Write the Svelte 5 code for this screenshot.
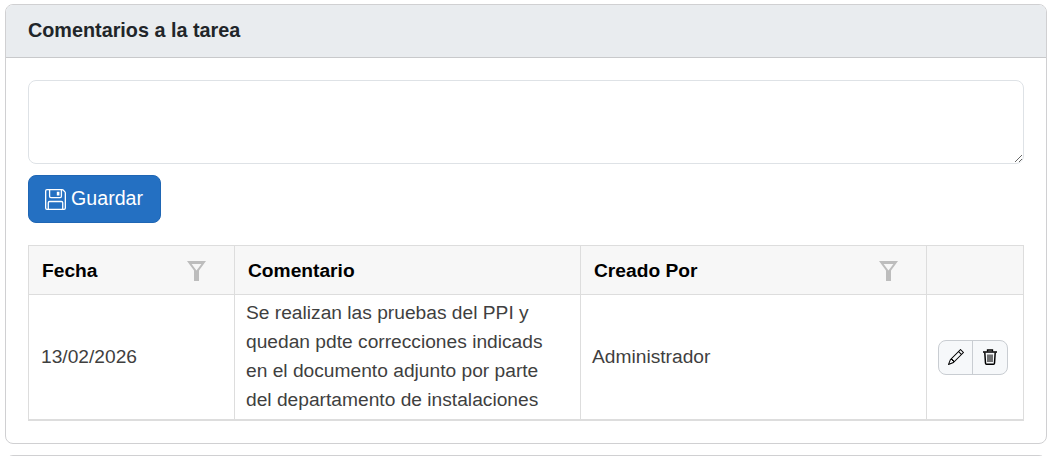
<script>
  const filas = [
    {
      fecha: '13/02/2026',
      comentario: 'Se realizan las pruebas del PPI y quedan pdte correcciones indicads en el documento adjunto por parte del departamento de instalaciones',
      autor: 'Administrador'
    }
  ];
</script>

{#snippet embudo()}
  <svg class="embudo" viewBox="0 0 19 20" width="19" height="20" aria-hidden="true">
    <path d="M0 0h19l-7 9.5V20H7V9.5z M4.6 3l4.9 6.4L14.4 3z" fill-rule="evenodd" fill="#bdbdbd" />
  </svg>
{/snippet}

<div class="pagina">
  <section class="tarjeta">
    <header class="cabecera">Comentarios a la tarea</header>
    <div class="cuerpo">
      <textarea class="comentario" aria-label="Comentario"></textarea>

      <button class="guardar">
        <svg viewBox="0 0 16 16" width="21" height="21" fill="currentColor" aria-hidden="true">
          <path d="M11 2H9v3h2V2Z" />
          <path d="M1.5 0h11.586a1.5 1.5 0 0 1 1.06.44l1.415 1.414A1.5 1.5 0 0 1 16 2.914V14.5a1.5 1.5 0 0 1-1.5 1.5h-13A1.5 1.5 0 0 1 0 14.5v-13A1.5 1.5 0 0 1 1.5 0ZM1 1.5v13a.5.5 0 0 0 .5.5H2v-4.5A1.5 1.5 0 0 1 3.5 9h9a1.5 1.5 0 0 1 1.5 1.5V15h.5a.5.5 0 0 0 .5-.5V2.914a.5.5 0 0 0-.146-.353l-1.415-1.415A.5.5 0 0 0 13.086 1H13v4.5A1.5 1.5 0 0 1 11.5 7h-7A1.5 1.5 0 0 1 3 5.5V1H1.5a.5.5 0 0 0-.5.5Zm3-.5v4.5a.5.5 0 0 0 .5.5h7a.5.5 0 0 0 .5-.5V1H4Zm9 14v-4.5a.5.5 0 0 0-.5-.5h-9a.5.5 0 0 0-.5.5V15h10Z" />
        </svg>
        <span class="rotulo">Guardar</span>
      </button>

      <table class="tabla">
        <colgroup>
          <col style="width: 206px" />
          <col style="width: 346px" />
          <col style="width: 346px" />
          <col />
        </colgroup>
        <thead>
          <tr>
            <th><div class="titulo">Fecha {@render embudo()}</div></th>
            <th><div class="titulo">Comentario</div></th>
            <th><div class="titulo">Creado Por {@render embudo()}</div></th>
            <th></th>
          </tr>
        </thead>
        <tbody>
          {#each filas as fila}
            <tr>
              <td class="fecha">{fila.fecha}</td>
              <td class="texto">{fila.comentario}</td>
              <td class="autor">{fila.autor}</td>
              <td>
                <div class="acciones">
                  <button aria-label="Editar">
                    <svg viewBox="0 0 16 16" width="16" height="16" fill="#000" aria-hidden="true">
                      <path d="M12.146.146a.5.5 0 0 1 .708 0l3 3a.5.5 0 0 1 0 .708l-10 10a.5.5 0 0 1-.168.11l-5 2a.5.5 0 0 1-.65-.65l2-5a.5.5 0 0 1 .11-.168l10-10zM11.207 2.5 13.5 4.793 14.793 3.5 12.5 1.207 11.207 2.5zm1.586 3L10.5 3.207 4 9.707V10h.5a.5.5 0 0 1 .5.5v.5h.5a.5.5 0 0 1 .5.5v.5h.293l6.5-6.5zm-9.761 5.175-.106.106-1.528 3.821 3.821-1.528.106-.106A.5.5 0 0 1 5 12.5V12h-.5a.5.5 0 0 1-.5-.5V11h-.5a.5.5 0 0 1-.468-.325z" />
                    </svg>
                  </button>
                  <button aria-label="Eliminar">
                    <svg viewBox="0 0 16 16" width="16" height="16" fill="none" stroke="#000" aria-hidden="true">
                      <path d="M1 3h14" stroke-width="1.6" />
                      <path d="M5.5 2.5V1h5v1.500" stroke-width="1.3" />
                      <path d="M2.800 3.500l.7 10.800a1 1 0 0 0 1 .9h7a1 1 0 0 0 1-.9l.7-10.800" stroke-width="1.5" />
                      <path d="M6 5.500v7.500M8 5.500v7.500M10 5.500v7.500" stroke-width="1.1" />
                    </svg>
                  </button>
                </div>
              </td>
            </tr>
          {/each}
        </tbody>
      </table>
    </div>
  </section>
  <div class="siguiente"></div>
</div>

<style>
  :global(body) {
    background: #fff;
    font-family: "Liberation Sans", Arial, sans-serif;
    color: #212529;
  }

  .pagina {
    height: 456px;
    overflow: hidden;
    padding: 4px 5px 0;
    box-sizing: border-box;
  }

  .tarjeta {
    height: 440px;
    box-sizing: border-box;
    border: 1px solid #d0d0d2;
    border-radius: 8px;
    overflow: hidden;
  }

  .siguiente {
    height: 8px;
    margin-top: 11px;
    border: 1px solid #d0d0d2;
    border-radius: 8px 8px 0 0;
  }

  .cabecera {
    height: 53px;
    box-sizing: border-box;
    padding: 0 22px 2px;
    display: flex;
    align-items: center;
    background: #e9ecef;
    border-bottom: 1px solid #c8c9cb;
    font-size: 19.8px;
    font-weight: 700;
    color: #212529;
  }

  .cuerpo {
    padding: 22px 22px;
    display: flex;
    flex-direction: column;
    align-items: flex-start;
  }

  .comentario {
    display: block;
    width: 100%;
    height: 84px;
    box-sizing: border-box;
    border: 1px solid #dee2e6;
    border-radius: 8px;
    padding: 8px 12px;
    font: inherit;
    outline: none;
    resize: both;
  }

  .guardar {
    margin-top: 11px;
    height: 48px;
    width: 133px;
    box-sizing: border-box;
    padding: 0 17px 0 16px;
    display: flex;
    align-items: center;
    justify-content: space-between;
    background: #2470c2;
    border: 1px solid #1f66b4;
    border-radius: 8px;
    color: #fff;
    font-family: inherit;
    font-size: 19.6px;
  }

  .rotulo { margin-bottom: 2px; }

  .tabla {
    margin-top: 22px;
    width: 100%;
    table-layout: fixed;
    border-collapse: collapse;
    font-size: 19.2px;
    color: #3f3f3f;
  }

  th, td {
    border: 1px solid #dddddd;
    padding: 0 12px;
    text-align: left;
  }

  td { padding-top: 1px; }

  th {
    height: 48px;
    background: #f7f7f7;
    color: #000;
    font-weight: 700;
    font-size: 19.2px;
  }

  tbody tr { border-bottom: 2px solid #dddddd; }

  .titulo {
    display: flex;
    align-items: center;
    justify-content: space-between;
    padding-left: 1px;
    padding-right: 16px;
    line-height: 22px;
    padding-top: 1px;
  }

  .embudo { flex: none; }

  .autor { padding-left: 11px; }

  .texto {
    height: 125px;
    line-height: 29px;
    box-sizing: border-box;
    padding: 0 30px 2px 11px;
  }

  .acciones {
    display: flex;
    justify-content: center;
    width: 70px;
    margin-left: -1px;
    height: 35px;
    box-sizing: border-box;
    border: 1px solid #c9cdd2;
    border-radius: 8px;
    background: #f6f8fa;
    overflow: hidden;
  }

  .acciones button {
    padding: 0;
    border: 0;
    background: transparent;
    display: flex;
    align-items: center;
    justify-content: center;
  }

  .acciones button:first-child { width: 33px; }

  .acciones button + button {
    flex: 1;
    border-left: 1px solid #c9cdd2;
  }
</style>
